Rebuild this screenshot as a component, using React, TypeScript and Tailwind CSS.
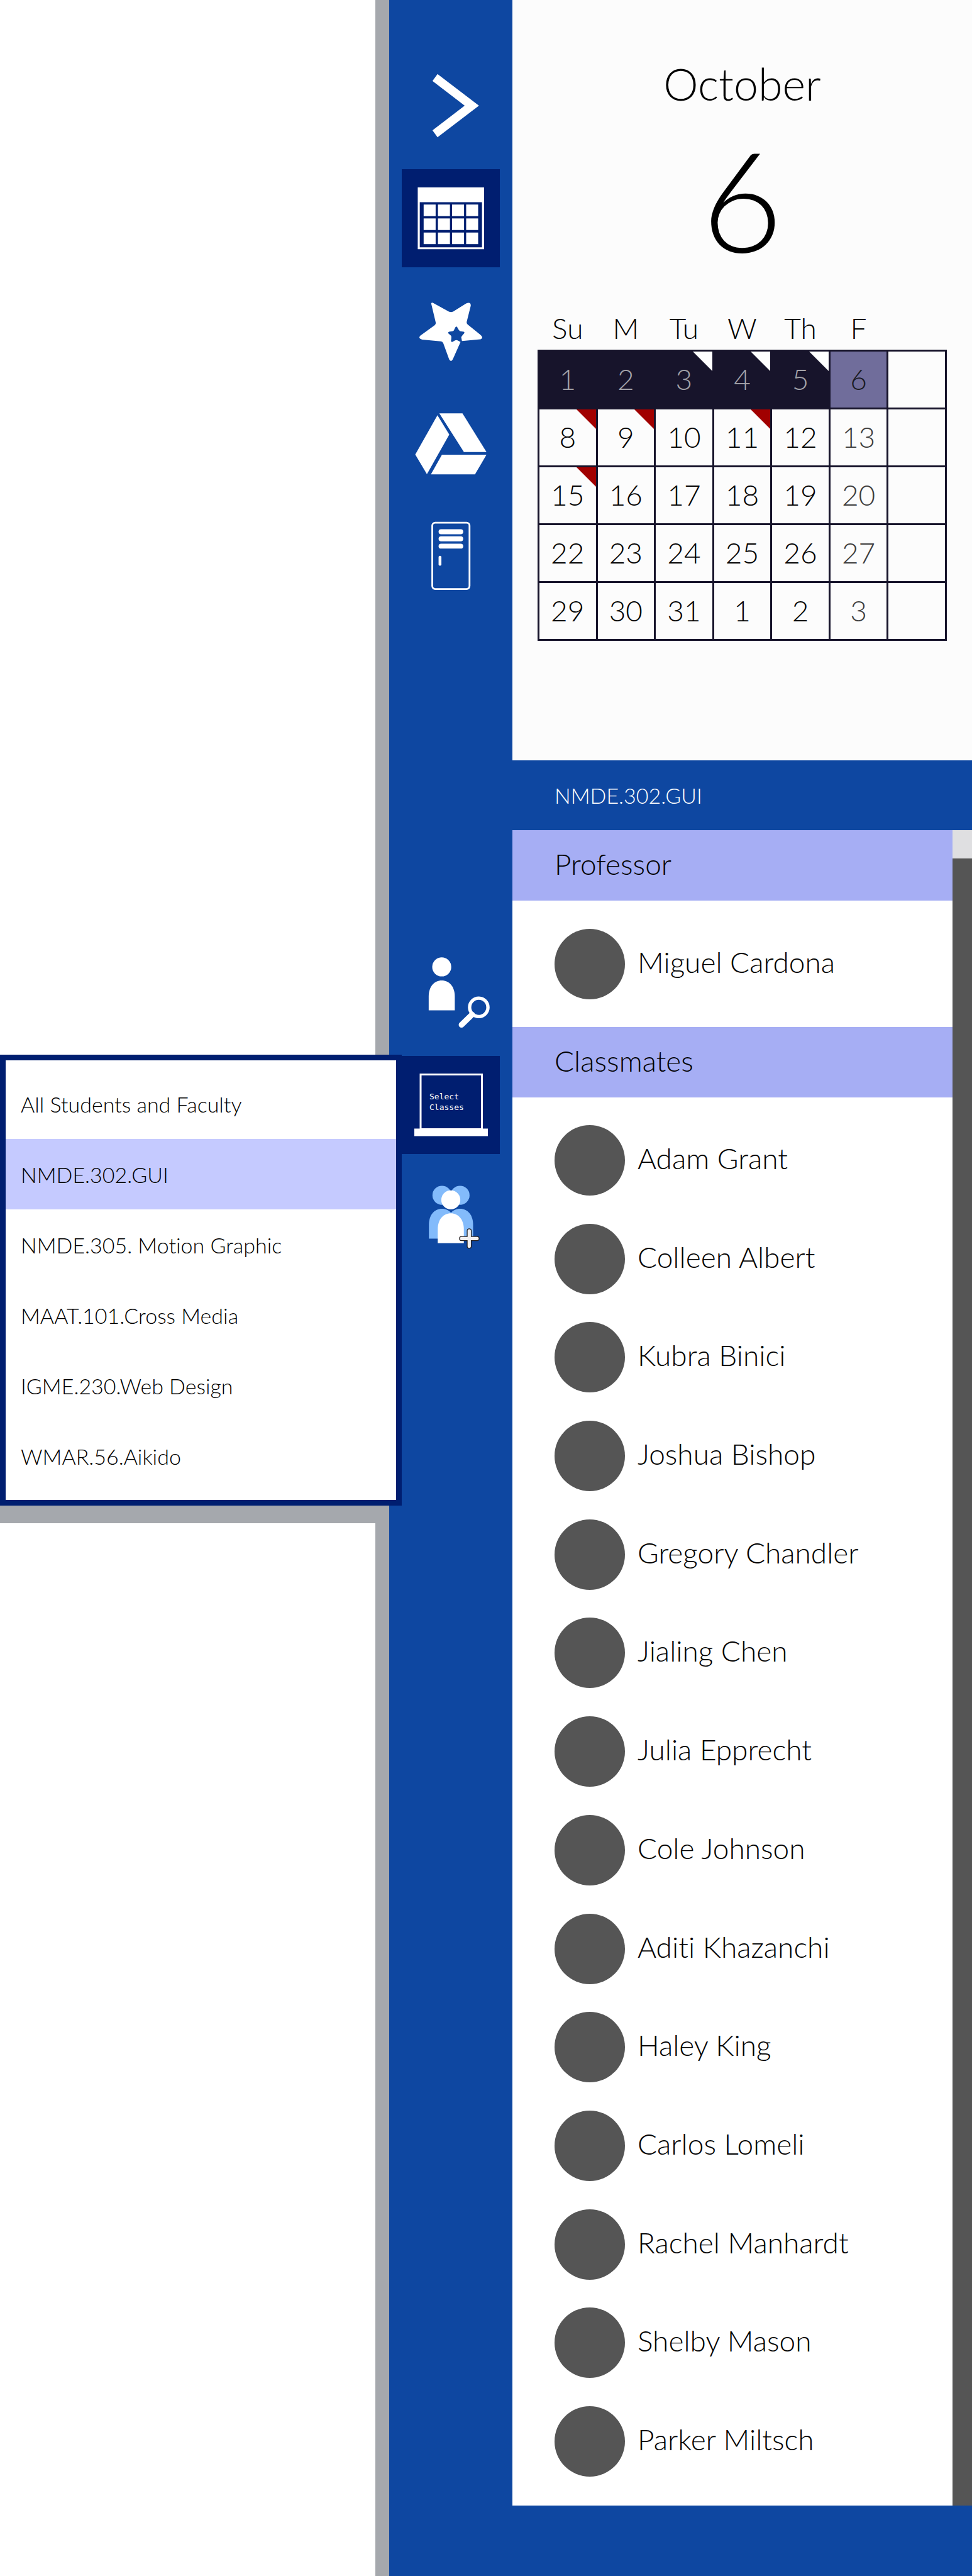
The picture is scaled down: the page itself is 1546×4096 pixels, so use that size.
import React from 'react';

const WEEKDAYS = ['Su', 'M', 'Tu', 'W', 'Th', 'F', ''];
const WEEKS = [
  ['1', '2', '3', '4', '5', '6', ''],
  ['8', '9', '10', '11', '12', '13', ''],
  ['15', '16', '17', '18', '19', '20', ''],
  ['22', '23', '24', '25', '26', '27', ''],
  ['29', '30', '31', '1', '2', '3', ''],
];
// Days with an event, one list for each week.
const EVENTS = [['3', '4', '5'], ['8', '9', '11'], ['15'], [], []];
const COURSES = [
  'All Students and Faculty',
  'NMDE.302.GUI',
  'NMDE.305. Motion Graphic',
  'MAAT.101.Cross Media',
  'IGME.230.Web Design',
  'WMAR.56.Aikido',
];
const CLASSMATES = [
  'Adam Grant',
  'Colleen Albert',
  'Kubra Binici',
  'Joshua Bishop',
  'Gregory Chandler',
  'Jialing Chen',
  'Julia Epprecht',
  'Cole Johnson',
  'Aditi Khazanchi',
  'Haley King',
  'Carlos Lomeli',
  'Rachel Manhardt',
  'Shelby Mason',
  'Parker Miltsch',
];

function RailButton({ label, active, children }: { label: string; active?: boolean; children: React.ReactNode }) {
  return (
    <button
      type="button"
      aria-label={label}
      className={active ? 'block size-[156px] shrink-0 bg-[#001e70]' : 'block size-[156px] shrink-0'}
    >
      {children}
    </button>
  );
}

function Glyph({ children }: { children: React.ReactNode }) {
  return (
    <svg viewBox="0 0 233 233" className="block size-full fill-white" aria-hidden="true">
      {children}
    </svg>
  );
}

function Person({ x, y, className }: { x: number; y: number; className?: string }) {
  return (
    <g transform={`translate(${x} ${y})`} className={className}>
      <circle cx="0" cy="0" r="22.6" />
      <path d="M-31 103V70C-31 46-17.500 32 0 32S31 46 31 70V103Z" />
    </g>
  );
}

function DayCell({ day, week, weekday }: { day: string; week: number; weekday: number }) {
  const past = week === 0 && weekday < 5;
  const today = week === 0 && weekday === 5;
  let tone = 'text-black';
  if (past) tone = 'bg-[#17142b] text-[#a3a3a9]';
  else if (today) tone = 'bg-[#706d9b] text-[#1a1a22]';
  else if (weekday === 5) tone = 'text-[#3d3d3d]';
  return (
    <td className={`relative h-[92px] border-[3px] border-[#17142b] p-0 text-center ${tone}`}>
      {day}
      {EVENTS[week].includes(day) && (
        <svg viewBox="0 0 10 10" className="absolute top-0 right-0 size-[31px]" aria-hidden="true">
          <path d="M0 0H10V10Z" className={past ? 'fill-white' : 'fill-[#a10000]'} />
        </svg>
      )}
    </td>
  );
}

function PersonRow({ name }: { name: string }) {
  return (
    <li className="flex items-center gap-5">
      <span className="size-28 shrink-0 rounded-full bg-[#555]" />
      <span className="pb-1.5 text-[46px] leading-[56px] text-black">{name}</span>
    </li>
  );
}

export default function App() {
  return (
    <div className="flex min-h-screen bg-white font-['Lato',sans-serif] font-light text-black [font-variant-ligatures:none]">
      <aside className="relative flex flex-[597] flex-col pt-[1677px]">
        <nav
          aria-label="Classes"
          className="relative z-10 mr-[-42px] border-[9px] border-[#001e70] bg-white pt-[13px] pb-[14px]"
        >
          {COURSES.map((course) => (
            <a
              key={course}
              href="#"
              className={
                course === 'NMDE.302.GUI'
                  ? 'flex h-28 items-center bg-[#c5caff] pl-6 text-[34px] text-black'
                  : 'flex h-28 items-center pl-6 text-[34px] text-black'
              }
            >
              {course}
            </a>
          ))}
        </nav>
        <div className="h-7 bg-[#a5a8ad]" />
      </aside>

      <div className="flex w-[218px] shrink-0 flex-col items-end gap-[23px] border-l-[22px] border-[#a5a8ad] bg-[#0e47a1] px-5 pt-[90px]">
        <RailButton label="Expand">
          <Glyph>
            <path d="M85 41.500 183.400 116.600 85 191.700 73 175 149.500 116.600 73 58Z" />
          </Glyph>
        </RailButton>
        <RailButton label="Calendar" active>
          <Glyph>
            <path
              fillRule="evenodd"
              d="M38 43.500H195.500V190H38ZM42.800 78.300V185.500H190.600V78.300Z"
            />
            {[84, 117, 150.5].map((y) =>
              [52, 86, 119.5, 153].map((x) => <rect key={`${x}-${y}`} x={x} y={y} width="28.500" height="27.500" />),
            )}
          </Glyph>
        </RailButton>
        <RailButton label="Favorites">
          <Glyph>
            <path
              transform="translate(28 32.600) scale(0.3333)"
              d="M126 58Q126 48 138 52L252 115Q267 122 282 115L375 57Q408 42 408 72L379 188Q377 199 386 207L480 283Q500 303 478 312L345 324L340 298Q342 290 360 271Q366 262 358 259L330 254Q322 248 312 227Q305 216 298 227L287 250Q281 257 253 258Q242 262 250 272L268 288Q272 295 267 322Q268 334 278 330L296 320Q305 316 314 320L335 331L280 455Q267 478 254 456L212 340Q206 328 194 327L62 314Q30 305 48 286L150 212Q161 204 158 192Z"
            />
          </Glyph>
        </RailButton>
        <RailButton label="Drive">
          <Glyph>
            <path d="M84.800 49.500 112.900 95.500 59.800 189.500 32.100 143Z" />
            <path d="M89.300 45H144.200L201.300 137.200H147.700Z" />
            <path d="M95.500 143.500H201.300L174 190H69.200Z" />
          </Glyph>
        </RailButton>
        <RailButton label="Locker">
          <Glyph>
            <rect x="72.500" y="37.500" width="88.500" height="157.500" rx="7" className="fill-none stroke-white" strokeWidth="4.200" />
            <rect x="87.500" y="53" width="58.500" height="11.800" rx="5.900" />
            <rect x="87.500" y="70" width="58.500" height="11.800" rx="5.900" />
            <rect x="87.500" y="87.300" width="58.500" height="11.800" rx="5.900" />
            <rect x="87.500" y="116.300" width="6.700" height="23.500" rx="3" />
          </Glyph>
        </RailButton>

        <div className="mt-[515px] flex flex-col gap-[23px]">
          <RailButton label="Find a person">
            <Glyph>
              <Person x={95} y={56} />
              <circle cx="183" cy="152" r="21.800" className="fill-none stroke-white" strokeWidth="8" />
              <path d="M142 193.500 167 169" className="stroke-white" strokeWidth="13.500" strokeLinecap="round" />
            </Glyph>
          </RailButton>
          <RailButton label="Select classes" active>
            <svg viewBox="0 0 156 156" className="block size-full fill-white" aria-hidden="true">
              <rect x="30" y="29.500" width="97.500" height="87" className="fill-none stroke-white" strokeWidth="3" />
              <rect x="20" y="115.500" width="117" height="12" />
              <g className="font-['DejaVu_Sans_Mono',monospace] text-[13px] font-normal">
                <text x="44" y="69">Select</text>
                <text x="44" y="86">Classes</text>
              </g>
            </svg>
          </RailButton>
          <RailButton label="Add group">
            <Glyph>
              <Person x={95.5} y={63.5} className="fill-[#83bbfb]" />
              <Person x={138.5} y={63.5} className="fill-[#83bbfb]" />
              <Person x={116.5} y={74.5} />
              <path
                d="M160.300 148V184.500M142 166.300H179"
                className="fill-none stroke-[#231f20]"
                strokeWidth="11.600"
                strokeLinecap="round"
              />
              <path
                d="M160.300 148V184.500M142 166.300H179"
                className="fill-none stroke-[#f1f0f2]"
                strokeWidth="7.800"
                strokeLinecap="round"
              />
            </Glyph>
          </RailButton>
        </div>
      </div>

      <main className="flex min-w-0 flex-[731] flex-col">
        <section className="flex h-[1209px] flex-col bg-[#fcfcfc] px-10 pt-[93px]">
          <h1 className="text-center text-[70px] leading-[80px]">October</h1>
          <p className="text-center text-[222px] leading-[284px]">6</p>
          <table className="w-full table-fixed border-collapse text-[46px] leading-[56px]">
            <thead>
              <tr>
                {WEEKDAYS.map((d, i) => (
                  <th key={i} className="h-[100px] p-0 pb-1.5 text-center align-bottom font-light">
                    {d}
                  </th>
                ))}
              </tr>
            </thead>
            <tbody>
              {WEEKS.map((days, week) => (
                <tr key={week}>
                  {days.map((day, weekday) => (
                    <DayCell key={weekday} day={day} week={week} weekday={weekday} />
                  ))}
                </tr>
              ))}
            </tbody>
          </table>
        </section>

        <h2 className="flex h-[111px] items-center bg-[#0e47a1] pl-[67px] text-[34px] text-white">NMDE.302.GUI</h2>

        <div className="flex flex-1">
          <div className="flex flex-1 flex-col">
            <h3 className="flex h-28 items-center bg-[#a6aef4] pb-1.5 pl-[67px] text-[46px]">Professor</h3>
            <ul className="flex h-[201px] flex-col justify-center pl-[67px]">
              <PersonRow name="Miguel Cardona" />
            </ul>
            <h3 className="flex h-28 items-center bg-[#a6aef4] pb-1.5 pl-[67px] text-[46px]">Classmates</h3>
            <ul className="flex flex-1 flex-col justify-between pt-11 pb-[46px] pl-[67px]">
              {CLASSMATES.map((name) => (
                <PersonRow key={name} name={name} />
              ))}
            </ul>
          </div>
          <div className="w-[31px] bg-[#dfdfe1] pt-[45px]">
            <div className="h-full bg-[#555]" />
          </div>
        </div>

        <footer className="h-28 bg-[#0e47a1]" />
      </main>
    </div>
  );
}
